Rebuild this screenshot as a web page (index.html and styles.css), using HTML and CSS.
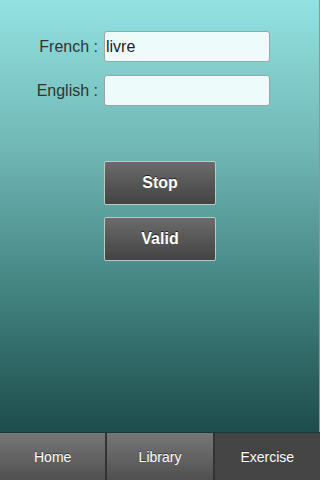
FILE: index.html
```html
<!DOCTYPE html>
<html>
<head>
<meta charset="utf-8">
<link rel="stylesheet" href="styles.css">
</head>
<body>
<div class="app">
  <main class="content">
    <div class="form">
      <div class="row">
        <label class="label">French :</label>
        <div class="input">livre</div>
      </div>
      <div class="row">
        <label class="label">English :</label>
        <div class="input"></div>
      </div>
    </div>
    <div class="buttons">
      <button class="btn">Stop</button>
      <button class="btn">Valid</button>
    </div>
  </main>
  <nav class="tabs">
    <div class="tab">Home</div>
    <div class="tab">Library</div>
    <div class="tab active">Exercise</div>
  </nav>
</div>
</body>
</html>
```
FILE: styles.css
```css
* { box-sizing: border-box; }
html, body { margin: 0; padding: 0; }
body {
  width: 320px;
  height: 480px;
  font-family: "Liberation Sans", Arial, sans-serif;
  overflow: hidden;
}
.app {
  display: flex;
  flex-direction: column;
  height: 480px;
}
.content {
  flex: 1;
  background: linear-gradient(to bottom, #93e2e2 0%, #6fb6b4 35%, #3f7f7c 70%, #1d4c4b 100%);
  border-right: 1px solid #8a9a9a;
  display: flex;
  flex-direction: column;
  padding-top: 31px;
}
.form {
  display: flex;
  flex-direction: column;
  gap: 13px;
}
.row {
  display: flex;
  align-items: center;
}
.label {
  width: 104px;
  text-align: right;
  padding-right: 6px;
  font-size: 16px;
  color: #333;
}
.input {
  width: 166px;
  height: 31px;
  background: #eefbfb;
  border: 1px solid #9aa6a6;
  border-radius: 3px;
  font-size: 16px;
  color: #222;
  padding: 0 1px;
  display: flex;
  align-items: center;
}
.buttons {
  margin-top: 55px;
  margin-left: 104px;
  display: flex;
  flex-direction: column;
  gap: 12px;
}
.btn {
  width: 112px;
  height: 44px;
  background: linear-gradient(to bottom, #6b6b6b, #434343);
  border: 1px solid #b9c8c8;
  border-radius: 2px;
  color: #fff;
  font-family: "Liberation Sans", Arial, sans-serif;
  font-weight: bold;
  font-size: 16px;
  text-shadow: 0 -1px 0 #222;
  padding: 0;
}
.tabs {
  height: 48px;
  display: flex;
  border-top: 1px solid #163a38;
  background: #555;
}
.tab {
  flex: 1;
  display: flex;
  align-items: center;
  justify-content: center;
  background: linear-gradient(to bottom, #777, #505050);
  color: #fff;
  font-size: 14px;
  text-shadow: 0 -1px 0 #333;
  border-right: 2px solid #333;
}
.tab:last-child { border-right: none; }
.tab.active {
  background: #454545;
}
```
